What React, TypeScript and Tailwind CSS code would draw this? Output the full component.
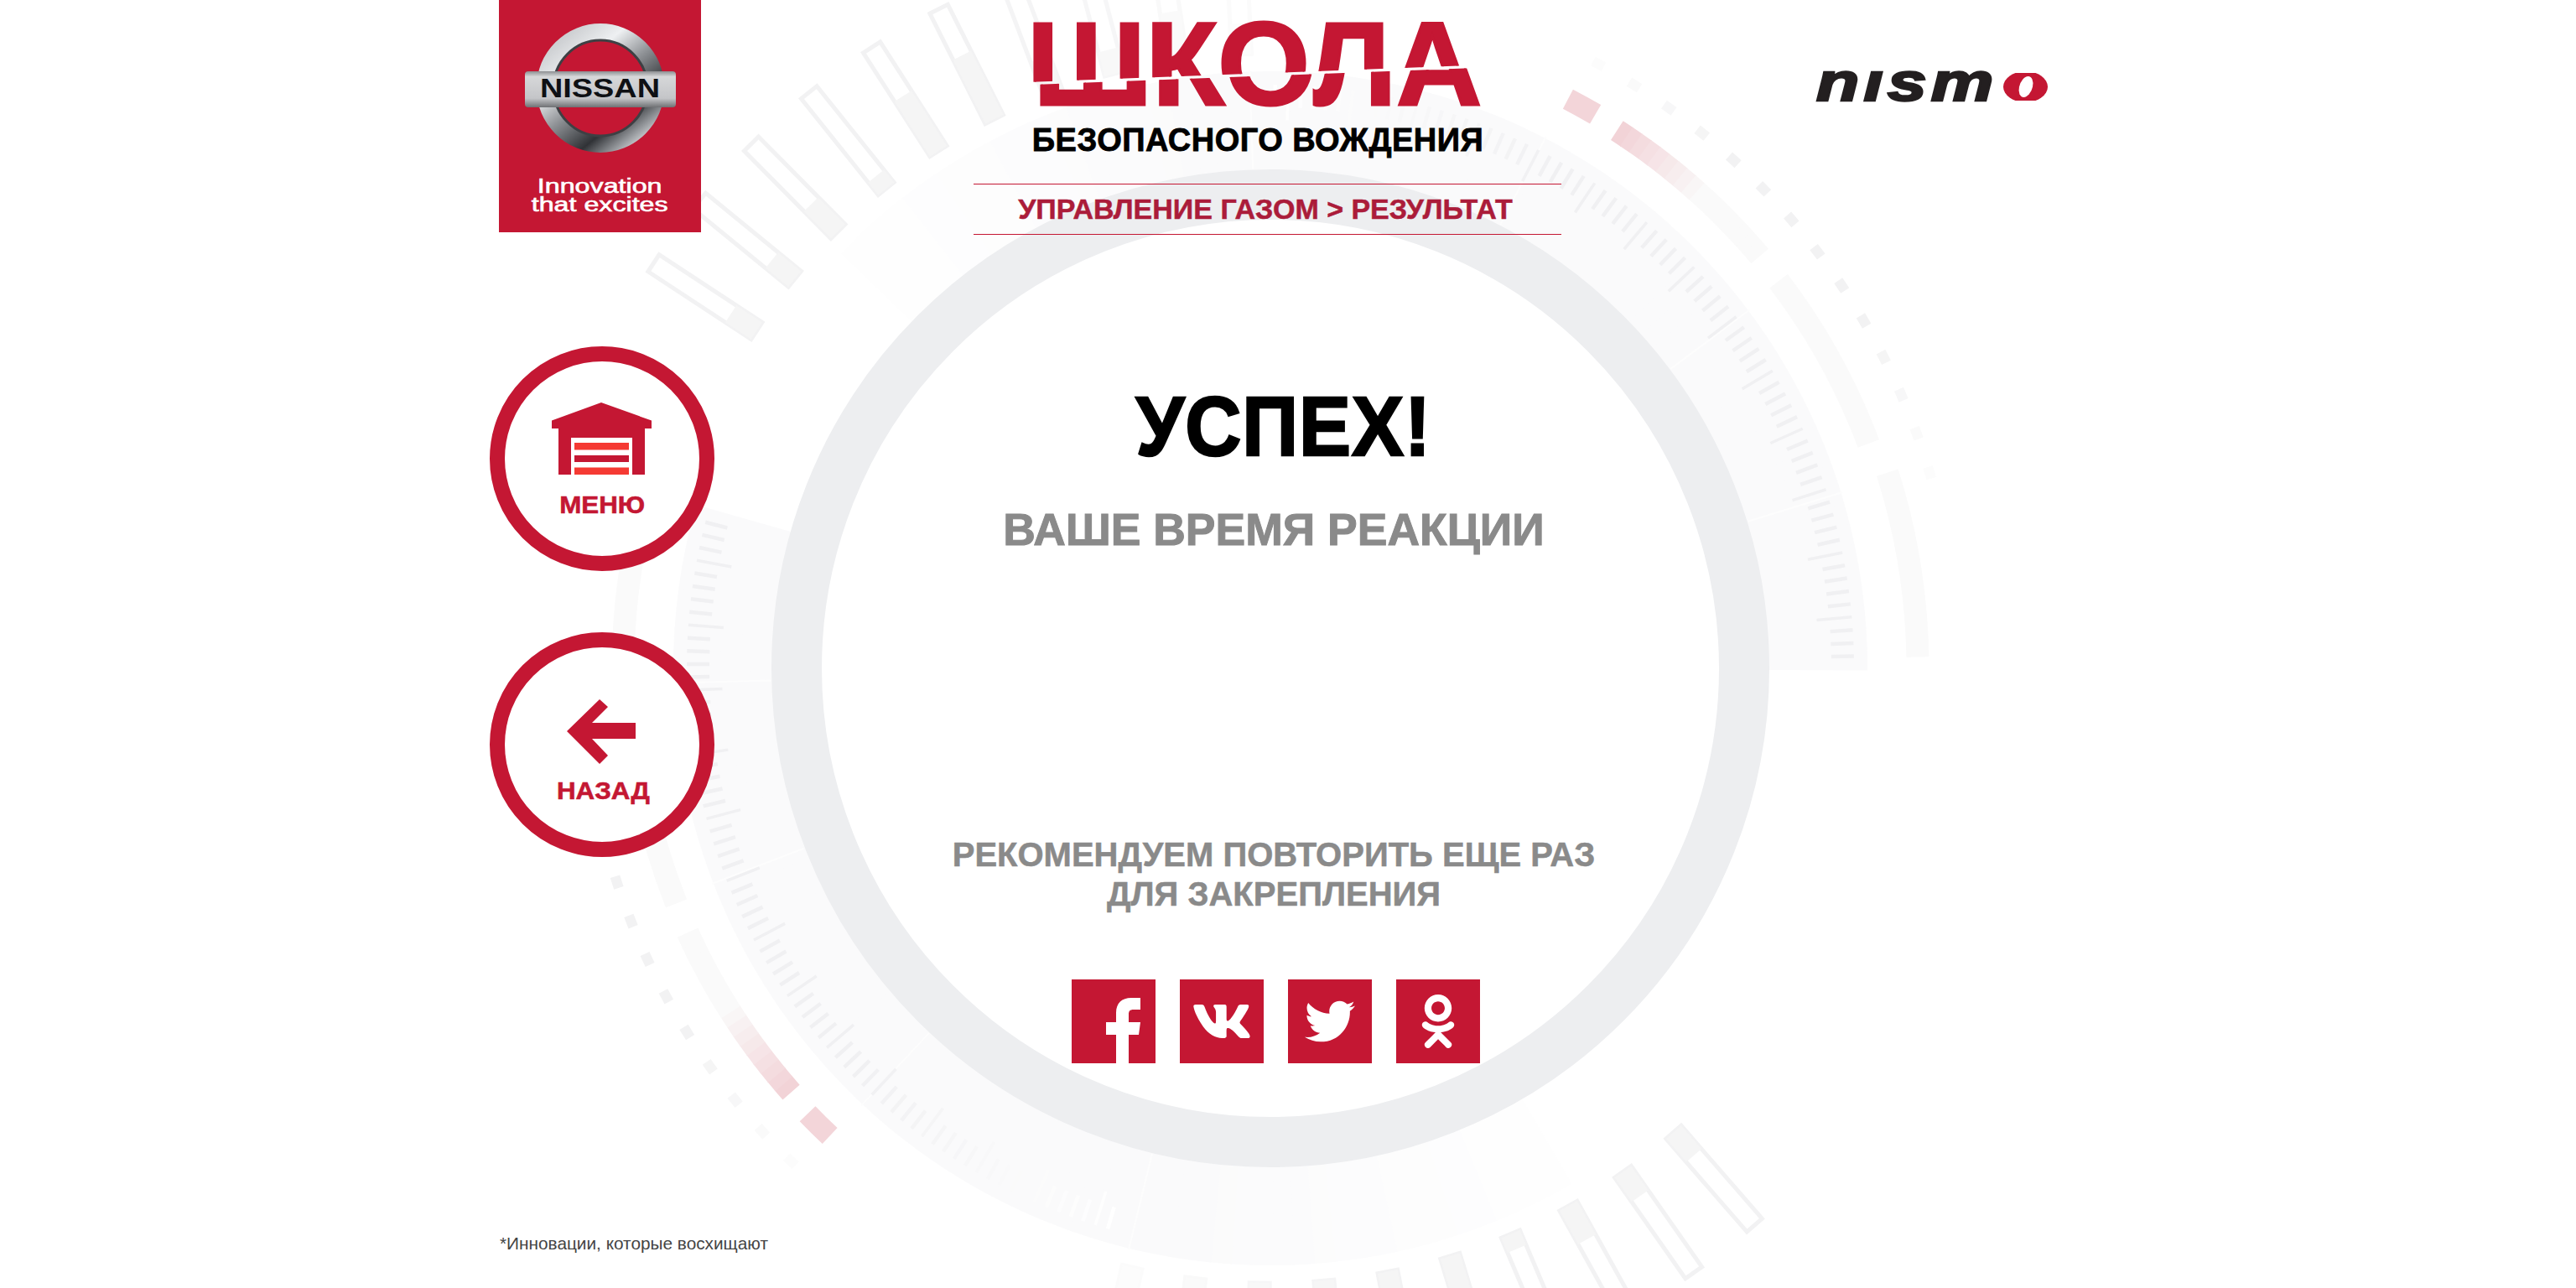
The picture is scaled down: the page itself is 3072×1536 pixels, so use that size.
import { FaVk, FaTwitter, FaOdnoklassniki } from "react-icons/fa";

const CX = 1515;
const CY = 797;

// Точка на окружности вокруг центра кольца
const pol = (r: number, deg: number) => {
  const a = (deg * Math.PI) / 180;
  return [CX + r * Math.cos(a), CY + r * Math.sin(a)];
};

const arc = (r: number, a0: number, a1: number) => {
  const [x0, y0] = pol(r, a0);
  const [x1, y1] = pol(r, a1);
  return `M${x0} ${y0} A${r} ${r} 0 ${a1 - a0 > 180 ? 1 : 0} 1 ${x1} ${y1}`;
};

const mix = (from: number[], to: number[], t: number) => {
  const k = Math.max(0, Math.min(1, t));
  return `rgb(${from.map((v, i) => Math.round(v + (to[i] - v) * k)).join(",")})`;
};

const WHITE = [255, 255, 255];
const BAND = [250, 250, 251];
const TICK = [240, 240, 242];
const PINK = [242, 211, 215];
const FAINT = [250, 250, 250];

const barFills = [0.25, 0.24, 0.31, 0.13, 0.53, 0.58, 0.3, 0.2, 0.4, 0.25];

const GaugeGroup = () => {
  const bandSegments = [];
  for (let a = -142; a < 0; a += 2) {
    bandSegments.push(
      <path key={a} d={arc(653, a, a + 2.2)} fill="none" strokeWidth={118} stroke={mix(WHITE, BAND, (a + 142) / 45)} />
    );
  }

  const ticks = [];
  for (let i = 0; i < 70; i++) {
    const a = -1.2 - i * 1.28;
    const long = i % 5 === 3;
    const [x0, y0] = pol(long ? 654 : 669, a);
    const [x1, y1] = pol(696, a);
    ticks.push(
      <line key={i} x1={x0} y1={y0} x2={x1} y2={y1} strokeWidth={long ? 3.5 : 4.5} stroke={mix(WHITE, TICK, (90 + a) / 30)} />
    );
  }

  const redArc = [];
  for (let i = 0; i < 17; i++) {
    const a = -57.2 + i;
    redArc.push(
      <path key={i} d={arc(763, a, a + 1.1)} fill="none" strokeWidth={27} stroke={mix(PINK, FAINT, i / 9)} />
    );
  }

  const dots = [];
  for (let i = 0; i < 14; i++) {
    const a = -61.5 + i * 3.46;
    const edge = Math.min(i, 13 - i) / 4;
    dots.push(
      <path key={i} d={arc(820, a - 0.5, a + 0.5)} fill="none" strokeWidth={12} stroke={mix([252, 252, 252], [242, 242, 243], edge)} />
    );
  }

  const bars = barFills.map((fill, i) => {
    const a = -146.7 + i * 6;
    const [x, y] = pol(733, a);
    const fade = i < 6 ? 1 : 1 - (i - 5) * 0.18;
    return (
      <g key={i} transform={`rotate(${a} ${x} ${y})`} opacity={fade}>
        <rect x={x} y={y - 12} width={147} height={24} fill="#ffffff" stroke="#f2f2f3" strokeWidth={5} />
        <rect x={x} y={y - 12} width={147 * fill} height={24} fill="#f5f5f5" />
      </g>
    );
  });

  return (
    <g>
      {bandSegments}
      {[-92, -62.6, -36.8, -17.1].map((a) => {
        const [x0, y0] = pol(596, a);
        const [x1, y1] = pol(714, a);
        return <line key={a} x1={x0} y1={y0} x2={x1} y2={y1} stroke="#fdfdfd" strokeWidth={2} />;
      })}
      {ticks}
      {redArc}
      <path d={arc(766, -62.4, -59.6)} fill="none" strokeWidth={26} stroke="#f3d5d9" />
      <path d={arc(762, -37.3, -20.6)} fill="none" strokeWidth={27} stroke="#fafafa" />
      <path d={arc(772, -17.6, -1)} fill="none" strokeWidth={27} stroke="#fafafa" />
      {dots}
      {bars}
    </g>
  );
};

const Background = () => (
  <svg className="absolute inset-0" width={3072} height={1536} viewBox="0 0 3072 1536">
    <GaugeGroup />
    <g transform={`rotate(195.7 ${CX} ${CY})`}>
      <GaugeGroup />
    </g>
    <circle cx={CX} cy={CY} r={565} fill="#ffffff" stroke="#edeef0" strokeWidth={60} />
  </svg>
);

const NissanLogo = () => (
  <div className="ml-[11px] w-[241px] h-[277px] bg-[#c41733] flex flex-col items-center">
    <svg width={241} height={190} viewBox="0 0 241 190">
      <defs>
        <linearGradient id="chrome" x1="0.1" y1="0" x2="0.9" y2="1">
          <stop offset="0" stopColor="#c4c6c9" />
          <stop offset="0.28" stopColor="#eef0f2" />
          <stop offset="0.5" stopColor="#8f9296" />
          <stop offset="0.75" stopColor="#303236" />
          <stop offset="0.9" stopColor="#9a9da1" />
          <stop offset="1" stopColor="#e2e4e6" />
        </linearGradient>
        <linearGradient id="bar" x1="0" y1="0" x2="0" y2="1">
          <stop offset="0" stopColor="#8d8f92" />
          <stop offset="0.15" stopColor="#d6d7d9" />
          <stop offset="0.75" stopColor="#c4c5c8" />
          <stop offset="1" stopColor="#6f7174" />
        </linearGradient>
      </defs>
      <ellipse cx={121} cy={105} rx={66} ry={67} fill="none" stroke="url(#chrome)" strokeWidth={20} />
      <ellipse cx={121} cy={105} rx={56} ry={57} fill="none" stroke="#3e4044" strokeWidth={3} />
      <rect x={31} y={85} width={180} height={43} rx={4} fill="url(#bar)" />
      <text
        x={49}
        y={116}
        textLength={143}
        lengthAdjust="spacingAndGlyphs"
        fontFamily="'Liberation Sans', sans-serif"
        fontWeight={700}
        fontSize={31}
        fill="#0e1014"
      >
        NISSAN
      </text>
    </svg>
    <div className="mt-[22px] text-white font-['Liberation_Sans',sans-serif] font-normal text-[23px] leading-[21.5px] text-center scale-x-[1.4] whitespace-nowrap [-webkit-text-stroke:0.6px_#ffffff]">
      <div>Innovation</div>
      <div>that excites</div>
    </div>
  </div>
);

const GarageIcon = () => (
  <svg width={120} height={87} viewBox="659 480 120 87">
    <path d="M718 480 L778 501.5 V511 H770 V566 H755 V522 H682 V566 H667 V511 H659 V501.5 Z" fill="#c41733" />
    <rect x={686} y={528} width={65} height={8.5} fill="#f53a33" />
    <rect x={686} y={543} width={65} height={8} fill="#c41733" />
    <rect x={686} y={557.5} width={65} height={8.5} fill="#f53a33" />
  </svg>
);

const BackIcon = () => (
  <svg width={82} height={77} viewBox="675 833 82 77">
    <path d="M675 871 L714 833 L724 842 L705 861 H757 V880 H705 L724 900 L714 910 Z" fill="#c41733" />
  </svg>
);

const RoundButton = ({ label, icon, iconTop, textTop }: { label: string; icon: React.ReactNode; iconTop: string; textTop: string }) => (
  <div className="w-[268px] h-[268px] rounded-full border-[18px] border-[#c41733] bg-white flex flex-col items-center">
    <div className={iconTop}>{icon}</div>
    <div className={`${textTop} font-['Liberation_Sans',sans-serif] font-bold text-[29px] leading-[29px] text-[#c41733] scale-x-[1.08] [-webkit-text-stroke:0.6px_#c41733]`}>
      {label}
    </div>
  </div>
);

const SocialBox = ({ children }: { children: React.ReactNode }) => (
  <div className="w-[100px] h-[100px] bg-[#c41733] flex items-center justify-center text-white">{children}</div>
);

// Заголовок разрезан наклонной линией: вторая половина сдвинута вправо
const SchoolTitle = () => {
  const base = "block w-[540px] h-[130px] font-['Liberation_Sans',sans-serif] font-bold text-[141px] leading-[130px] text-[#c41733] whitespace-nowrap [-webkit-text-stroke:3px_#c41733]";
  return (
    <div className="relative w-[540px] h-[130px]">
      <span className={`${base} [clip-path:polygon(0_0,100%_0,100%_66.5px,0_87px)]`}>ШКОЛА</span>
      <span
        aria-hidden="true"
        className={`${base} absolute left-[8px] top-0 [clip-path:polygon(0_90px,100%_69.5px,100%_100%,0_100%)] before:content-['ШКОЛА']`}
      />
    </div>
  );
};

const NismoLogo = () => (
  <div className="ml-[304px] mt-[87px] flex items-start h-[33px] shrink-0">
    <div className="w-[222px] font-['Liberation_Sans',sans-serif] font-bold italic text-[64px] leading-[23px] text-[#231f20] tracking-[4px] origin-left scale-x-[1.31] whitespace-nowrap [-webkit-text-stroke:2.5px_#231f20]">
      nısm
    </div>
    <div className="ml-[1px] w-[53px] h-[33px] overflow-hidden flex items-center justify-center">
      <div className="w-[53px] h-[37px] shrink-0 rounded-[50%] bg-[#c41733] flex items-center justify-center">
        <div className="w-[16px] h-[25px] rounded-[50%] bg-white -skew-x-12" />
      </div>
    </div>
  </div>
);

export default function App() {
  return (
    <div className="relative w-[3072px] h-[1536px] overflow-hidden bg-white pl-[584px] flex font-['Liberation_Sans',sans-serif]">
      <Background />

      <aside className="relative w-[268px] shrink-0 flex flex-col">
        <NissanLogo />
        <div className="mt-[136px]">
          <RoundButton label="МЕНЮ" icon={<GarageIcon />} iconTop="mt-[49px]" textTop="mt-[21px]" />
        </div>
        <div className="mt-[73px]">
          <RoundButton label="НАЗАД" icon={<BackIcon />} iconTop="mt-[62px] mr-[2px]" textTop="mt-[18px] ml-[3px]" />
        </div>
        <div className="mt-[449px] ml-[12px] text-[20.8px] leading-[24px] text-[#444] whitespace-nowrap">
          *Инновации, которые восхищают
        </div>
      </aside>

      <main className="relative ml-[309px] w-[701px] shrink-0 flex flex-col items-center">
        <div className="mt-[11px] mr-[34px]">
          <SchoolTitle />
        </div>
        <div className="mt-[5px] mr-[23px] text-[38px] leading-[42px] tracking-[0.45px] font-bold text-black whitespace-nowrap [-webkit-text-stroke:0.8px_#000000]">
          БЕЗОПАСНОГО ВОЖДЕНИЯ
        </div>
        <div className="mt-[31px] pr-[5px] w-full h-[61px] border-y border-[#c41733] flex items-center justify-center text-[34px] font-bold text-[#ab1c3a] whitespace-nowrap [-webkit-text-stroke:0.5px_#ab1c3a]">
          УПРАВЛЕНИЕ ГАЗОМ &gt; РЕЗУЛЬТАТ
        </div>

        <div className="pl-[15px] flex flex-col items-center">
          <div className="mt-[178px] pl-[25px] text-[100px] leading-[100px] tracking-[1px] font-bold text-black whitespace-nowrap scale-x-[0.93] [-webkit-text-stroke:2.5px_#000000]">УСПЕХ!</div>
          <div className="mt-[44px] text-[53.5px] leading-[60px] font-bold text-[#8a8a8a] whitespace-nowrap [-webkit-text-stroke:1px_#8a8a8a]">ВАШЕ ВРЕМЯ РЕАКЦИИ</div>
          <div className="mt-[334px] text-[40px] leading-[47px] font-bold text-[#8a8a8a] text-center whitespace-nowrap [-webkit-text-stroke:0.5px_#8a8a8a]">
            <div>РЕКОМЕНДУЕМ ПОВТОРИТЬ ЕЩЕ РАЗ</div>
            <div>ДЛЯ ЗАКРЕПЛЕНИЯ</div>
          </div>
          <div className="mt-[78px] ml-[4px] flex gap-[29px]">
            <SocialBox>
              <svg width={100} height={100} viewBox="0 0 100 100">
                <path d="M53 100 V66 H41 V51 H53 V40 C53 28 60 22 71 22 H82 V36 H74 C69 36 68 38 68 42 V51 H82 L80 66 H68 V100 Z" fill="#ffffff" />
              </svg>
            </SocialBox>
            <SocialBox><FaVk size={72} /></SocialBox>
            <SocialBox><FaTwitter size={60} /></SocialBox>
            <SocialBox><FaOdnoklassniki size={64} /></SocialBox>
          </div>
        </div>
      </main>

      <NismoLogo />
    </div>
  );
}
